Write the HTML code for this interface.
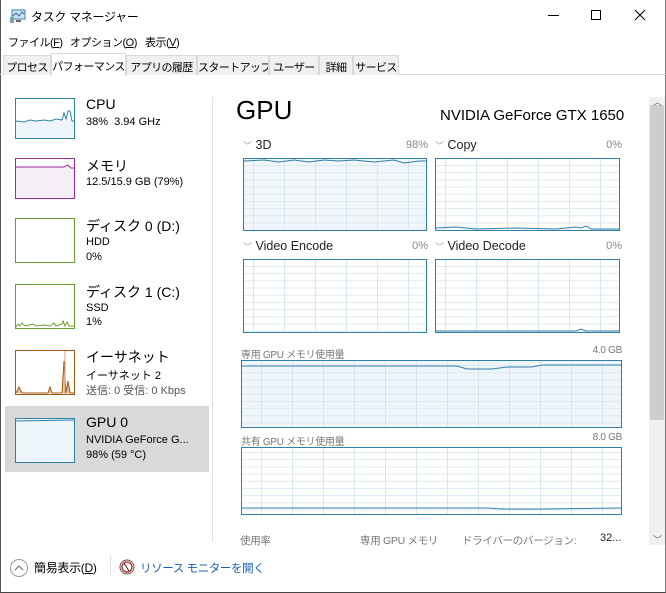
<!DOCTYPE html>
<html><head><meta charset="utf-8"><style>
*{margin:0;padding:0;box-sizing:border-box}
body{width:666px;height:593px;overflow:hidden;background:#fff;font-family:"Liberation Sans","Noto Sans CJK JP",sans-serif;color:#000;position:relative}
.a{position:absolute;white-space:nowrap}
.win{position:absolute;left:0;top:0;width:666px;height:593px;border-left:1px solid #555;border-right:1px solid #777;border-bottom:1px solid #444}
.tab{position:absolute;top:55px;height:20px;font-size:11px;letter-spacing:-0.6px;padding:3px 0 0;text-align:center;background:#f0f0f0;border:1px solid #d9d9d9;border-bottom:none;overflow:hidden;white-space:nowrap}
.thumb{position:absolute;left:15px;width:60px;height:41px;background:#fff}
.t1{position:absolute;left:86px;font-size:14px;white-space:nowrap}
.t2{position:absolute;left:86px;font-size:11px;white-space:nowrap}
.g{position:absolute;border:1px solid #2f7fa8;background-color:#fff;
background-image:linear-gradient(to right,#d8e6ef 1px,transparent 1px),linear-gradient(to bottom,#dde9f1 1px,transparent 1px);
background-size:31px 100%,100% 7.2px;background-position:9px 0,0 6px}
.gb{background-color:#f1f6fb}
.lbl{position:absolute;font-size:12.5px;color:#222;white-space:nowrap}
.pct{position:absolute;font-size:11px;color:#888}
.sm{position:absolute;font-size:10px;color:#777;white-space:nowrap;letter-spacing:-0.3px}
.mn{position:absolute;top:34px;font-size:11px;letter-spacing:-0.5px;white-space:nowrap}
</style></head><body>
<div class="win"></div>
<svg class="a" style="left:10px;top:9px" width="16" height="14"><rect x="2" y="1" width="13" height="9" fill="#cfe4f2" stroke="#3b7fae"/><polyline points="3,7 6,4 9,7 12,3 14,5" fill="none" stroke="#2a6e9e"/><rect x="0" y="8" width="4" height="6" fill="#7a9" /><rect x="6" y="11" width="5" height="2" fill="#666"/></svg>
<div class="a" style="left:31px;top:8px;font-size:12px;letter-spacing:-0.3px">タスク マネージャー</div>
<div class="a" style="left:548px;top:15px;width:11px;height:1px;background:#000"></div>
<div class="a" style="left:591px;top:10px;width:10px;height:10px;border:1px solid #000"></div>
<svg class="a" style="left:634px;top:9px" width="12" height="12"><path d="M1 1L11 11M11 1L1 11" stroke="#000" stroke-width="1"/></svg>
<div class="mn" style="left:8px">ファイル(<u>F</u>)</div>
<div class="mn" style="left:70px">オプション(<u>O</u>)</div>
<div class="mn" style="left:145px">表示(<u>V</u>)</div>
<div class="a" style="left:0;top:74px;width:666px;height:1px;background:#d9d9d9"></div>
<div class="tab" style="left:3px;width:48px">プロセス</div>
<div class="tab" style="left:51px;width:75px;top:53px;height:23px;background:#fff;padding-top:4px">パフォーマンス</div>
<div class="tab" style="left:126px;width:71px">アプリの履歴</div>
<div class="tab" style="left:197px;width:72px">スタートアップ</div>
<div class="tab" style="left:269px;width:50px">ユーザー</div>
<div class="tab" style="left:319px;width:34px">詳細</div>
<div class="tab" style="left:353px;width:46px">サービス</div>
<div class="a" style="left:212px;top:97px;width:1px;height:445px;background:#e0e0e0"></div>
<div class="thumb" style="top:98px;border:1px solid #2b87a8;background:linear-gradient(#fff 55%,#eef5fa 55%)"><svg width="58" height="39"><polyline points="0,22 8,23 14,21 20,22 28,21 34,22 40,20 46,21 48,14 50,20 52,12 54,12 56,22 58,22" fill="none" stroke="#2b87a8"/></svg></div>
<div class="t1" style="top:96px">CPU</div><div class="t2" style="top:116px">38%&nbsp; 3.94 GHz</div>
<div class="thumb" style="top:158px;border:1px solid #9b2aa5;background:linear-gradient(#fff 22%,#f4eef5 22%)"><svg width="58" height="39"><polyline points="0,8 48,8 52,6 55,9 58,9" fill="none" stroke="#9b2aa5"/></svg></div>
<div class="t1" style="top:156px">メモリ</div><div class="t2" style="top:176px">12.5/15.9 GB (79%)</div>
<div class="thumb" style="top:218px;height:45px;border:1px solid #6a9f2e"></div>
<div class="t1" style="top:216px">ディスク 0 (D:)</div><div class="t2" style="top:236px">HDD</div><div class="t2" style="top:251px">0%</div>
<div class="thumb" style="top:284px;height:45px;border:1px solid #6a9f2e"><svg width="58" height="43"><polyline points="0,42 2,39 4,41 6,38 9,41 14,40 17,39 20,41 28,40 34,41 38,38 40,41 46,39 47,36 49,41 51,37 53,41 58,41" fill="none" stroke="#6a9f2e"/></svg></div>
<div class="t1" style="top:282px">ディスク 1 (C:)</div><div class="t2" style="top:302px">SSD</div><div class="t2" style="top:316px">1%</div>
<div class="thumb" style="top:350px;height:45px;border:1px solid #a35a10"><svg width="58" height="43"><polyline points="0,42 3,36 6,42 32,42 34,36 36,42 46,42 48,10 50,42 52,30 54,42 58,42" fill="#e4c3a4" stroke="#a35a10"/><line x1="49" y1="0" x2="49" y2="43" stroke="#d6a77e"/></svg></div>
<div class="t1" style="top:347px">イーサネット</div><div class="t2" style="top:367px">イーサネット 2</div><div class="t2" style="top:382px;color:#555">送信: 0 受信: 0 Kbps</div>
<div class="a" style="left:5px;top:406px;width:204px;height:66px;background:#d9d9d9"></div>
<div class="thumb" style="top:418px;height:45px;border:1px solid #2b7fa8;background:#eef5fb"><svg width="58" height="43"><polyline points="0,2 58,1" fill="none" stroke="#2b7fa8"/></svg></div>
<div class="t1" style="top:414px">GPU 0</div><div class="t2" style="top:434px">NVIDIA GeForce G...</div><div class="t2" style="top:449px">98% (59 °C)</div>
<div class="a" style="left:236px;top:95px;font-size:26px">GPU</div>
<div class="a" style="left:440px;top:107px;font-size:15px;width:183px;text-align:right">NVIDIA GeForce GTX 1650</div>
<div class="lbl" style="left:243px;top:138px"><span style="color:#999;font-size:9px">﹀</span> 3D</div><div class="pct" style="left:400px;top:139px;width:28px;text-align:right">98%</div>
<div class="lbl" style="left:435px;top:138px"><span style="color:#999;font-size:9px">﹀</span> Copy</div><div class="pct" style="left:592px;top:139px;width:30px;text-align:right">0%</div>
<div class="g gb" style="left:243px;top:158px;width:184px;height:73px"><svg width="182" height="71" style="position:absolute;left:0;top:0"><polyline points="0,2 20,1 35,3 50,1 65,3 80,1 95,2 110,1 130,3 150,1 160,4 175,2 182,2" fill="none" stroke="#2f7fa8"/></svg></div>
<div class="g" style="left:435px;top:158px;width:185px;height:73px"><svg width="183" height="71" style="position:absolute;left:0;top:0"><polyline points="0,69 20,68 40,70 80,69 120,70 140,68 145,69 150,67 155,70 183,70" fill="none" stroke="#2f7fa8"/></svg></div>
<div class="lbl" style="left:243px;top:239px"><span style="color:#999;font-size:9px">﹀</span> Video Encode</div><div class="pct" style="left:400px;top:240px;width:28px;text-align:right">0%</div>
<div class="lbl" style="left:435px;top:239px"><span style="color:#999;font-size:9px">﹀</span> Video Decode</div><div class="pct" style="left:592px;top:240px;width:30px;text-align:right">0%</div>
<div class="g" style="left:243px;top:259px;width:184px;height:74px"></div>
<div class="g" style="left:435px;top:259px;width:185px;height:74px"><svg width="183" height="72" style="position:absolute;left:0;top:0"><polyline points="0,71 140,71 145,69 150,71 183,71" fill="none" stroke="#2f7fa8"/></svg></div>
<div class="sm" style="left:241px;top:346px">専用 GPU メモリ使用量</div><div class="sm" style="left:560px;top:345px;width:62px;text-align:right">4.0 GB</div>
<div class="g" style="left:241px;top:360px;width:381px;height:68px;background-color:#eef5fb;background-position:19px 0,0 4px"><svg width="379" height="66" style="position:absolute;left:0;top:0"><polyline points="0,5 215,5 225,8 250,8 265,6 290,6 300,4 379,4" fill="none" stroke="#2f7fa8"/></svg></div>
<div class="sm" style="left:241px;top:433px">共有 GPU メモリ使用量</div><div class="sm" style="left:560px;top:432px;width:62px;text-align:right">8.0 GB</div>
<div class="g" style="left:241px;top:447px;width:381px;height:68px;background-position:19px 0,0 4px"><svg width="379" height="66" style="position:absolute;left:0;top:0"><polyline points="0,60 245,60 260,61 300,61 379,60" fill="none" stroke="#2f7fa8"/></svg></div>
<div class="sm" style="left:240px;top:533px;font-size:10.5px">使用率</div>
<div class="sm" style="left:360px;top:533px;font-size:10.5px">専用 GPU メモリ</div>
<div class="sm" style="left:462px;top:533px;font-size:10.5px">ドライバーのバージョン:</div>
<div class="a" style="left:600px;top:532px;font-size:11px;color:#222">32...</div>
<div class="a" style="left:649px;top:97px;width:16px;height:448px;background:#f0f0f0"></div>
<div class="a" style="left:650px;top:105px;width:14px;height:315px;background:#cdcdcd"></div>
<div class="a" style="left:653px;top:95px;font-size:9px;color:#606060">︿</div>
<div class="a" style="left:653px;top:533px;font-size:9px;color:#606060">﹀</div>
<svg class="a" style="left:9px;top:558px" width="20" height="20"><circle cx="10" cy="10" r="8.5" fill="none" stroke="#999"/><polyline points="6,12 10,8 14,12" fill="none" stroke="#777" stroke-width="1.2"/></svg>
<div class="a" style="left:34px;top:559px;font-size:12px;letter-spacing:-0.3px">簡易表示(<u>D</u>)</div>
<div class="a" style="left:110px;top:556px;width:1px;height:20px;background:#ddd"></div>
<svg class="a" style="left:119px;top:559px" width="16" height="16"><circle cx="8" cy="8" r="7" fill="#fff" stroke="#555"/><circle cx="8" cy="8" r="5" fill="none" stroke="#c33" stroke-width="1.5"/><line x1="5" y1="4" x2="10" y2="12" stroke="#333"/></svg>
<div class="a" style="left:140px;top:560px;font-size:11.5px;letter-spacing:-0.4px;color:#1a5fb4">リソース モニターを開く</div>
</body></html>
